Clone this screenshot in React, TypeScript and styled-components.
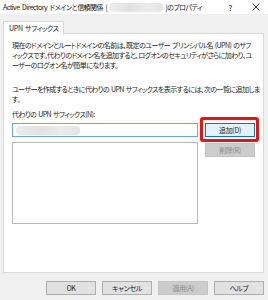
import * as React from "react";
import styled, { createGlobalStyle } from "styled-components";

const GlobalStyle = createGlobalStyle`
  html, body {
    margin: 0;
    padding: 0;
    background: #f0f0f0;
  }
  body {
    font-family: "Noto Sans CJK JP", "Noto Sans", sans-serif;
    font-feature-settings: "palt";
    color: #1a1a1a;
  }
`;

const Window = styled.div`
  width: 268px;
  height: 300px;
  display: flex;
  flex-direction: column;
  background: #f0f0f0;
  overflow: hidden;
`;

const TitleBar = styled.div`
  height: 14px;
  flex: none;
  background: #ffffff;
  display: flex;
  align-items: center;
  padding-left: 3px;
  font-size: 7px;
  letter-spacing: -0.55px;
  word-spacing: 1.5px;
  white-space: nowrap;
`;

const TitleText = styled.span`
  flex: 1;
  display: flex;
  align-items: center;
`;

const Blur = styled.span<{ $w: number }>`
  display: inline-block;
  width: ${({ $w }) => $w}px;
  height: 9px;
  margin: 0 2px;
  border-radius: 4px;
  background: linear-gradient(90deg, #ececec, #e2e2e2 40%, #ebebeb 70%, #e4e4e4);
  filter: blur(0.6px);
`;

const TitleButton = styled.span<{ $w: number }>`
  width: ${({ $w }) => $w}px;
  display: flex;
  justify-content: center;
  align-items: center;
  font-size: 8px;
`;

const Body = styled.div`
  flex: 1;
  display: flex;
  flex-direction: column;
  padding: 7px 4px 5px 3px;
`;

const TabStrip = styled.div`
  display: flex;
  height: 12px;
`;

const Tab = styled.div`
  padding: 0 4px 0 5px;
  background: #ffffff;
  border: 1px solid #d9d9d9;
  border-bottom: none;
  font-size: 7px;
  line-height: 12px;
  letter-spacing: -0.3px;
  word-spacing: 1px;
  position: relative;
  z-index: 1;
  height: 13px;
`;

const Panel = styled.div`
  flex: 1;
  background: #ffffff;
  border: 1px solid #d9d9d9;
  padding: 6px 8px 0 8px;
  font-size: 7px;
  line-height: 10px;
  letter-spacing: -0.55px;
  word-spacing: 0.8px;
`;

const Para = styled.p<{ $gap: number }>`
  margin: 0 0 ${({ $gap }) => $gap}px 0;
  white-space: nowrap;
`;

const Label = styled.div`
  margin-bottom: 4px;
  white-space: nowrap;
`;

const Row = styled.div`
  display: flex;
  gap: 7px;
`;

const LeftCol = styled.div`
  width: 188px;
  display: flex;
  flex-direction: column;
  gap: 5px;
`;

const RightCol = styled.div`
  display: flex;
  flex-direction: column;
  gap: 6px;
`;

const TextBox = styled.div`
  height: 14px;
  box-sizing: border-box;
  border: 1px solid #6aa6ea;
  padding: 2px 1px;
  display: flex;
  align-items: center;
`;

const ListBox = styled.div`
  height: 82px;
  box-sizing: border-box;
  border: 1px solid #b9b9b9;
`;

const Button = styled.button<{ $primary?: boolean }>`
  width: 50px;
  height: 14px;
  box-sizing: border-box;
  padding: 0;
  margin: 0;
  font-family: inherit;
  font-feature-settings: "palt";
  font-size: 7px;
  letter-spacing: -0.3px;
  line-height: 12px;
  color: ${({ disabled }) => (disabled ? "#8a8a8a" : "#1a1a1a")};
  background: ${({ disabled, $primary }) =>
    disabled ? "#cccccc" : $primary ? "#e5f1fb" : "#e1e1e1"};
  border: 1px solid
    ${({ disabled, $primary }) =>
      disabled ? "#c4c4c4" : $primary ? "#0078d7" : "#adadad"};
`;

const Highlight = styled.div`
  position: relative;
`;

const RedBox = styled.span`
  position: absolute;
  left: -5px;
  right: -4px;
  top: -6px;
  bottom: -5px;
  border: 3px solid #ee1111;
  border-radius: 3px;
  pointer-events: none;
`;

const Footer = styled.div`
  display: flex;
  justify-content: flex-end;
  gap: 6px;
  padding-top: 8px;
`;

const App: React.FC = () => {
  return (
    <Window>
      <GlobalStyle />
      <TitleBar>
        <TitleText>
          Active Directory ドメインと信頼関係 [<Blur $w={54} />]のプロパティ
        </TitleText>
        <TitleButton $w={28}>?</TitleButton>
        <TitleButton $w={24}>
          <svg width="8" height="8" viewBox="0 0 8 8">
            <path d="M0.5 0.5 L7.5 7.5 M7.5 0.5 L0.5 7.5" stroke="#222" strokeWidth="0.9" />
          </svg>
        </TitleButton>
      </TitleBar>
      <Body>
        <TabStrip>
          <Tab>UPN サフィックス</Tab>
        </TabStrip>
        <Panel>
          <Para $gap={14}>
            現在のドメインとルートドメインの名前は、既定のユーザー プリンシパル名 (UPN) のサフ
            <br />
            ィックスです。代わりのドメイン名を追加すると、ログオンのセキュリティがさらに加わり、ユ
            <br />
            ーザーのログオン名が簡単になります。
          </Para>
          <Para $gap={5}>
            ユーザーを作成するときに代わりの UPN サフィックスを表示するには、次の一覧に追加しま
            <br />
            す。
          </Para>
          <Label>代わりの UPN サフィックス(N):</Label>
          <Row>
            <LeftCol>
              <TextBox>
                <Blur $w={64} />
              </TextBox>
              <ListBox />
            </LeftCol>
            <RightCol>
              <Highlight>
                <Button $primary>追加(D)</Button>
                <RedBox />
              </Highlight>
              <Button disabled>削除(R)</Button>
            </RightCol>
          </Row>
        </Panel>
        <Footer>
          <Button>OK</Button>
          <Button>キャンセル</Button>
          <Button disabled>適用(A)</Button>
          <Button>ヘルプ</Button>
        </Footer>
      </Body>
    </Window>
  );
};

export default App;
